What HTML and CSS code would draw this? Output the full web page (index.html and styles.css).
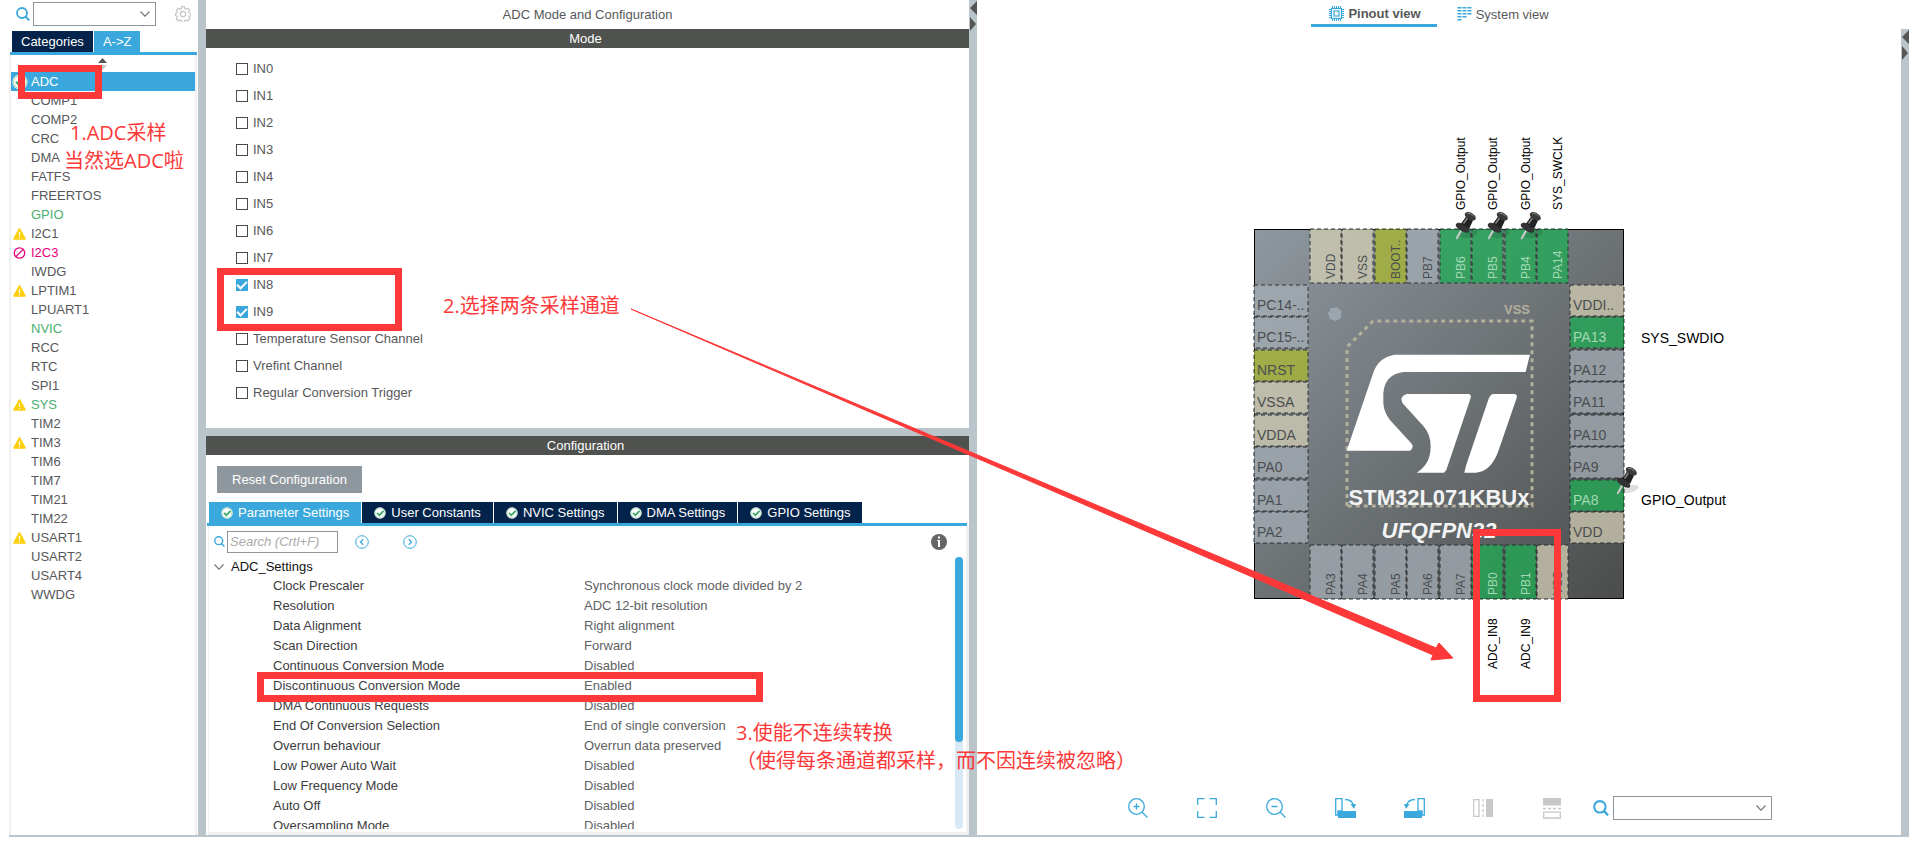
FILE: index.html
```html
<!DOCTYPE html>
<html lang="en">
<head>
<meta charset="utf-8">
<title>ADC Mode and Configuration</title>
<link rel="stylesheet" href="styles.css">
</head>
<body>
<svg class="defs" aria-hidden="true">
  <symbol id="search" viewBox="0 0 14 14"><circle cx="6" cy="6" r="5" fill="none" stroke="#3aa8dc" stroke-width="1.8"/><path d="M9.5 9.5 13.2 13.4" stroke="#3aa8dc" stroke-width="2"/></symbol>
  <symbol id="chevron" viewBox="0 0 10 6"><path d="M.5.5 5 5.2 9.5.5" fill="none" stroke="#777" stroke-width="1.2"/></symbol>
  <symbol id="warn" viewBox="0 0 13 12"><path d="M6.5 1 12 11H1Z" fill="#ffcf0a" stroke="#ffcf0a" stroke-width="1.6" stroke-linejoin="round"/><path d="M6.5 4v4M6.5 9v1.2" stroke="#fff" stroke-width="1.2"/></symbol>
  <symbol id="banned" viewBox="0 0 12 12"><circle cx="6" cy="6" r="5.2" fill="none" stroke="#e6007e" stroke-width="1.3"/><path d="M2.4 9.6 9.6 2.4" stroke="#e6007e" stroke-width="1.3"/></symbol>
  <symbol id="ok" viewBox="0 0 12 12"><circle cx="6" cy="6" r="5.7" fill="#fff"/><circle cx="6" cy="6" r="4.9" fill="#fff" stroke="#a9d9b8" stroke-width=".8"/><path d="M3 5.8 5.4 8.2 9.6 3.8" fill="none" stroke="#3cab64" stroke-width="1.7"/></symbol>
  <symbol id="pushpin" viewBox="0 0 32 30">
    <ellipse cx="14" cy="23" rx="9" ry="3.5" transform="rotate(-14 14 23)" fill="#000" opacity=".13"/>
    <path d="M1.5 28 7 18" stroke="#d8d8d8" stroke-width="2"/><path d="M2.3 28 7.6 19" stroke="#888" stroke-width=".7"/>
    <path d="M.8 13.5C2 11 6 11.5 9 14c4 2 6 5 5 7-2 2-6 0-9-2C2 17 .3 15 .8 13.5Z" fill="#333"/>
    <path d="M6 12.5 11.5 5 18 9.500 14 18Z" fill="#222"/><path d="M8.500 12.500 12.500 7" stroke="#888" stroke-width="1.5"/>
    <path d="M9.800 3C11 .3 15 .5 18 3c3 2 3.500 4.500 2 6-2 1.300-6-.3-8-2C10.300 5.500 9.500 4.200 9.800 3Z" fill="#3a3a3a"/><path d="M12 3c2-1.500 5 .4 6.500 2.300" stroke="#909090" fill="none"/>
  </symbol>
</svg>

<div class="workspace">
  <aside class="sidebar">
    <div class="side-search">
      <svg class="i14"><use href="#search"/></svg>
      <div class="combo"><select aria-label="Search peripherals"><option></option></select><svg class="chev"><use href="#chevron"/></svg></div>
      <button class="gear" aria-label="Settings"><svg width="16" height="16" viewBox="0 0 16 16" fill="none" stroke="#c4c4c4"><circle cx="8" cy="8" r="2.700" stroke-width="1.200"/><path stroke-width="1.200" d="M6.700.7h2.600l.5 1.900 1.300.6 1.700-1 1.900 1.900-1 1.700.5 1.200 2 .5v2l-2 .6-.5 1.200 1 1.700-1.900 1.900-1.700-1-1.300.5-.5 1.900H6.700l-.5-1.900-1.300-.5-1.700 1L1.300 13l1-1.700-.5-1.200-1.200-.6v-2l1.300-.5.5-1.200-1-1.700 1.800-1.900 1.700 1 1.300-.6Z"/></svg></button>
    </div>
    <div class="side-tabs"><button class="tab">Categories</button><button class="tab active">A-&gt;Z</button></div>
    <div class="side-body">
      <div class="sorter"><svg width="9" height="12" viewBox="0 0 9 12"><path d="M0 5 4.500 0 9 5Z" fill="#555"/><path d="M0 7 4.500 12 9 7Z" fill="#ccc"/></svg></div>
      <ul class="ips">
        <li class="selected"><svg class="big"><use href="#ok"/></svg>ADC</li>
        <li>COMP1</li><li>COMP2</li><li>CRC</li><li>DMA</li><li>FATFS</li><li>FREERTOS</li>
        <li class="on">GPIO</li>
        <li><svg><use href="#warn"/></svg>I2C1</li>
        <li class="off"><svg><use href="#banned"/></svg>I2C3</li>
        <li>IWDG</li>
        <li><svg><use href="#warn"/></svg>LPTIM1</li>
        <li>LPUART1</li><li class="on">NVIC</li><li>RCC</li><li>RTC</li><li>SPI1</li>
        <li class="on"><svg><use href="#warn"/></svg>SYS</li>
        <li>TIM2</li>
        <li><svg><use href="#warn"/></svg>TIM3</li>
        <li>TIM6</li><li>TIM7</li><li>TIM21</li><li>TIM22</li>
        <li><svg><use href="#warn"/></svg>USART1</li>
        <li>USART2</li><li>USART4</li><li>WWDG</li>
      </ul>
    </div>
  </aside>
  <div class="splitter"></div>

  <main class="center">
    <h1>ADC Mode and Configuration</h1>
    <section class="mode">
      <h2>Mode</h2>
      <div class="checks">
        <label><input type="checkbox">IN0</label>
        <label><input type="checkbox">IN1</label>
        <label><input type="checkbox">IN2</label>
        <label><input type="checkbox">IN3</label>
        <label><input type="checkbox">IN4</label>
        <label><input type="checkbox">IN5</label>
        <label><input type="checkbox">IN6</label>
        <label><input type="checkbox">IN7</label>
        <label><input type="checkbox" checked>IN8</label>
        <label><input type="checkbox" checked>IN9</label>
        <label><input type="checkbox">Temperature Sensor Channel</label>
        <label><input type="checkbox">Vrefint Channel</label>
        <label><input type="checkbox">Regular Conversion Trigger</label>
      </div>
    </section>
    <div class="splitter row"></div>
    <section class="config">
      <h2>Configuration</h2>
      <button class="reset">Reset Configuration</button>
      <div class="tabs">
        <button class="tab active"><svg><use href="#ok"/></svg>Parameter Settings</button>
        <button class="tab"><svg><use href="#ok"/></svg>User Constants</button>
        <button class="tab"><svg><use href="#ok"/></svg>NVIC Settings</button>
        <button class="tab"><svg><use href="#ok"/></svg>DMA Settings</button>
        <button class="tab"><svg><use href="#ok"/></svg>GPIO Settings</button>
      </div>
      <div class="config-body">
        <div class="find">
          <svg class="i11"><use href="#search"/></svg>
          <input type="text" placeholder="Search (Crtl+F)" aria-label="Search parameters">
          <button aria-label="Previous"><svg width="14" height="14" viewBox="0 0 14 14" fill="none" stroke="#3aa8dc"><circle cx="7" cy="7" r="6.300"/><path d="M8.200 4.200 5.500 7l2.700 2.800" stroke-width="1.300"/></svg></button>
          <button class="next" aria-label="Next"><svg width="14" height="14" viewBox="0 0 14 14" fill="none" stroke="#3aa8dc"><circle cx="7" cy="7" r="6.300"/><path d="M5.800 4.200 8.500 7 5.800 9.800" stroke-width="1.300"/></svg></button>
          <button class="info" aria-label="Information"><svg width="16" height="16" viewBox="0 0 16 16"><circle cx="8" cy="8" r="8" fill="#666"/><path d="M7 2.500h2v2H7zM6.200 6H9v7H7V7h-.8z" fill="#fff"/></svg></button>
        </div>
        <div class="params">
          <div class="scroller">
            <div class="group"><svg class="chev"><use href="#chevron"/></svg>ADC_Settings</div>
            <table>
              <tr><th scope="row">Clock Prescaler</th><td>Synchronous clock mode divided by 2</td></tr>
              <tr><th scope="row">Resolution</th><td>ADC 12-bit resolution</td></tr>
              <tr><th scope="row">Data Alignment</th><td>Right alignment</td></tr>
              <tr><th scope="row">Scan Direction</th><td>Forward</td></tr>
              <tr><th scope="row">Continuous Conversion Mode</th><td>Disabled</td></tr>
              <tr><th scope="row">Discontinuous Conversion Mode</th><td>Enabled</td></tr>
              <tr><th scope="row">DMA Continuous Requests</th><td>Disabled</td></tr>
              <tr><th scope="row">End Of Conversion Selection</th><td>End of single conversion</td></tr>
              <tr><th scope="row">Overrun behaviour</th><td>Overrun data preserved</td></tr>
              <tr><th scope="row">Low Power Auto Wait</th><td>Disabled</td></tr>
              <tr><th scope="row">Low Frequency Mode</th><td>Disabled</td></tr>
              <tr><th scope="row">Auto Off</th><td>Disabled</td></tr>
              <tr><th scope="row">Oversampling Mode</th><td>Disabled</td></tr>
            </table>
          </div>
          <div class="track"><div class="thumb"></div></div>
        </div>
      </div>
    </section>
  </main>
  <div class="splitter"><svg width="8" height="32" viewBox="0 0 8 32" fill="#555"><path d="M8 1v14L1 8ZM1 17v14l6-7Z"/></svg></div>

  <section class="pinout">
    <nav class="views">
      <button class="view active"><svg width="15" height="15" viewBox="0 0 15 15" fill="none" stroke="#3aa8dc"><path d="M3.500 0v15M5.500 0v15M7.500 0v15M9.500 0v15M11.500 0v15M0 3.500h15M0 5.500h15M0 7.500h15M0 9.500h15M0 11.500h15"/><rect x="2.500" y="2.500" width="10" height="10" fill="#fff" stroke-width="1.200"/><rect x="5" y="5" width="5" height="5" stroke-width="1.200"/></svg>Pinout view</button>
      <button class="view"><svg width="15" height="14" viewBox="0 0 15 14" stroke="#3aa8dc" fill="none"><path d="M2.500 0v14" stroke-width="4" stroke-dasharray="1.500 1.500"/><path d="M7.500 0v11" stroke-width="4" stroke-dasharray="1.500 1.500"/><path d="M12.500 0v8" stroke-width="4" stroke-dasharray="1.500 1.500"/></svg>System view</button>
    </nav>
    <div class="canvas">
      <svg class="chip" width="600" height="600" viewBox="-115 -115 600 600">
        <defs><linearGradient id="body" x1="0" y1="0" x2="1" y2="1"><stop offset="0" stop-color="#8f989f"/><stop offset=".5" stop-color="#6d7275"/><stop offset="1" stop-color="#4b4d4c"/></linearGradient></defs>
        <rect x=".5" y=".5" width="369" height="369" fill="url(#body)" stroke="#000"/>
        <g class="h">
          <g class="io" transform="translate(0 56)"><rect/><text>PC14-..</text></g>
          <g class="io" transform="translate(0 88)"><rect/><text>PC15-..</text></g>
          <g class="rst" transform="translate(0 121)"><rect/><text>NRST</text></g>
          <g class="pwr" transform="translate(0 153)"><rect/><text>VSSA</text></g>
          <g class="pwr" transform="translate(0 186)"><rect/><text>VDDA</text></g>
          <g class="io" transform="translate(0 218)"><rect/><text>PA0</text></g>
          <g class="io" transform="translate(0 251)"><rect/><text>PA1</text></g>
          <g class="io" transform="translate(0 283)"><rect/><text>PA2</text></g>
          <g class="pwr" transform="translate(316 56)"><rect/><text>VDDI..</text></g>
          <g class="used" transform="translate(316 88)"><rect/><text>PA13</text></g>
          <g class="io" transform="translate(316 121)"><rect/><text>PA12</text></g>
          <g class="io" transform="translate(316 153)"><rect/><text>PA11</text></g>
          <g class="io" transform="translate(316 186)"><rect/><text>PA10</text></g>
          <g class="io" transform="translate(316 218)"><rect/><text>PA9</text></g>
          <g class="used" transform="translate(316 251)"><rect/><text>PA8</text></g>
          <g class="pwr" transform="translate(316 283)"><rect/><text>VDD</text></g>
        </g>
        <g class="v">
          <g class="pwr" transform="translate(56 0)"><rect/><text>VDD</text></g>
          <g class="pwr" transform="translate(88 0)"><rect/><text>VSS</text></g>
          <g class="rst" transform="translate(121 0)"><rect/><text>BOOT..</text></g>
          <g class="io" transform="translate(153 0)"><rect/><text>PB7</text></g>
          <g class="used" transform="translate(186 0)"><rect/><text>PB6</text></g>
          <g class="used" transform="translate(218 0)"><rect/><text>PB5</text></g>
          <g class="used" transform="translate(251 0)"><rect/><text>PB4</text></g>
          <g class="used" transform="translate(283 0)"><rect/><text>PA14</text></g>
          <g class="io" transform="translate(56 316)"><rect/><text>PA3</text></g>
          <g class="io" transform="translate(88 316)"><rect/><text>PA4</text></g>
          <g class="io" transform="translate(121 316)"><rect/><text>PA5</text></g>
          <g class="io" transform="translate(153 316)"><rect/><text>PA6</text></g>
          <g class="io" transform="translate(186 316)"><rect/><text>PA7</text></g>
          <g class="used" transform="translate(218 316)"><rect/><text>PB0</text></g>
          <g class="used" transform="translate(251 316)"><rect/><text>PB1</text></g>
          <g class="pwr" transform="translate(283 316)"><rect/><text>VSS</text></g>
        </g>
        <circle cx="81" cy="85" r="7" fill="#9aa5ad" stroke="#75808a" stroke-dasharray="3 3"/>
        <path d="M93 277V118L119 92H278V277Z" fill="none" stroke="#b3b09b" stroke-width="3" stroke-dasharray="4 4"/>
        <text class="pad" x="276" y="85">VSS</text>
        <g transform="translate(-14 111) scale(.3333)" fill="#fff">
          <path d="M320 332 402 92Q420 50 465 44H870L857 96H490Q434 104 430 160V190Q432 218 450 240L515 311Q523 323 510 332Z"/>
          <path d="M500 162H686Q695 164 692 174L619 390 612 398H530Q572 372 572 320 572 282 550 258L488 190Q477 170 500 162Z"/>
          <path d="M760 162H824Q833 164 830 174L775 334Q752 396 708 398H673L679 374 744 182Q750 162 760 162Z"/>
        </g>
        <text class="part" x="185" y="276">STM32L071KBUx</text>
        <text class="part pkg" x="185" y="309">UFQFPN32</text>
        <g class="signals">
          <text x="387" y="114">SYS_SWDIO</text>
          <text x="387" y="276">GPIO_Output</text>
          <g class="vertical">
            <text transform="translate(211 -19) rotate(-90)">GPIO_Output</text>
            <text transform="translate(243 -19) rotate(-90)">GPIO_Output</text>
            <text transform="translate(276 -19) rotate(-90)">GPIO_Output</text>
            <text transform="translate(308 -19) rotate(-90)">SYS_SWCLK</text>
            <text transform="translate(243 440) rotate(-90)">ADC_IN8</text>
            <text transform="translate(276 440) rotate(-90)">ADC_IN9</text>
          </g>
        </g>
        <use href="#pushpin" x="201" y="-18" width="32" height="30"/>
        <use href="#pushpin" x="233" y="-18" width="32" height="30"/>
        <use href="#pushpin" x="266" y="-18" width="32" height="30"/>
        <use href="#pushpin" x="362" y="237" width="32" height="30"/>
      </svg>
    </div>
    <div class="tools">
      <button aria-label="Zoom in"><svg viewBox="0 0 20 20"><circle cx="8.500" cy="8.500" r="7.800"/><path d="M14 14 19.500 19.500M5.500 8.500h6M8.500 5.500v6"/></svg></button>
      <button aria-label="Fit"><svg viewBox="0 0 20 20"><path d="M.7 7V.7H7.500M12.500.7h6.800V7M19.300 13v6.300h-6.800M7.500 19.300H.7V13"/></svg></button>
      <button aria-label="Zoom out"><svg viewBox="0 0 20 20"><circle cx="8.500" cy="8.500" r="7.800"/><path d="M14 14 19.500 19.500M5.500 8.500h6"/></svg></button>
      <button aria-label="Rotate right"><svg viewBox="0 0 20 20"><path d="M.7 17V.7H7V13H3v4Z"/><path d="M3 13h18v7H3zM15.500 6h5.500l-2 5Z" class="solid"/><path d="M10 1.500q7 0 8.500 6"/></svg></button>
      <button aria-label="Rotate left"><svg viewBox="0 0 20 20"><path d="M20.300 17V.7H14V13H18v4Z"/><path d="M0 13h18v7H0zM0 6h5.500l-3.500 5Z" class="solid"/><path d="M11 1.500q-7 0-8.500 6"/></svg></button>
      <button aria-label="Flip horizontally" disabled><svg viewBox="0 0 20 20"><path d="M.7 1.700H6V18.300H.7Z"/><path d="M10 1v18" stroke-dasharray="3 2"/><path d="M13 1h7v18h-7z" class="solid"/></svg></button>
      <button aria-label="Flip vertically" disabled><svg viewBox="0 0 20 20"><path d="M1 0h18v7.500H1z" class="solid"/><path d="M1 10.500h18" stroke-dasharray="3 2"/><path d="M1.700 14.200H18.300V20H1.700Z"/></svg></button>
      <div class="pin-search"><svg class="i16"><use href="#search"/></svg><div class="combo"><select aria-label="Find pin"><option></option></select><svg class="chev"><use href="#chevron"/></svg></div></div>
    </div>
  </section>
  <div class="splitter last"><svg width="8" height="32" viewBox="0 0 8 32" fill="#555"><path d="M8 1v14L1 8ZM1 17v14l6-7Z"/></svg></div>
</div>

<svg class="notes">
  <g fill="none" stroke="#fc3838" stroke-width="7">
    <rect x="21.500" y="68.500" width="77" height="27"/>
    <rect x="220.500" y="271.500" width="178" height="56"/>
    <rect x="260.500" y="675.500" width="499" height="23"/>
    <rect x="1476.500" y="532.500" width="81" height="166"/>
  </g>
  <path d="M631 309 1436 648 1439 643 1453 658 1431 660 1433 655 Z" fill="#fc3838" stroke="#fc3838"/>
  <g class="note-text">
    <text x="70" y="140">1.ADC采样</text>
    <text x="64" y="168">当然选ADC啦</text>
    <text x="443" y="313">2.选择两条采样通道</text>
    <text x="736" y="740">3.使能不连续转换</text>
    <text x="736" y="768">（使得每条通道都采样，而不因连续被忽略）</text>
  </g>
</svg>
</body>
</html>
```
FILE: styles.css
```css
* { box-sizing: border-box; }
body {
  margin: 0;
  position: relative;
  background: #fff;
  color: #57585a;
  font: 13px/19px "Liberation Sans", Arial, sans-serif;
}
button, input, select { font: inherit; color: inherit; margin: 0; border-radius: 0; }
button { border: 0; padding: 0; background: none; }
svg { display: block; flex: none; }
h1, h2 { margin: 0; font-size: 13px; font-weight: 400; text-align: center; }
.defs { position: absolute; width: 0; height: 0; }

.workspace {
  display: grid;
  grid-template-columns: 189px 8px minmax(0, 763fr) 8px minmax(0, 924fr) 8px;
  height: calc(100vh - 8px);
  margin: 0 6px 0 9px;
  border-bottom: 2px solid #b9c4cb;
}
.splitter { background: #b9c4cb; }
.splitter.row { height: 8px; flex: none; }
.splitter.last { margin-top: 29px; }

.i11 { width: 11px; height: 11px; }
.i14 { width: 14px; height: 14px; }
.i16 { width: 16px; height: 16px; }
.combo { display: grid; align-items: center; }
.combo > * { grid-area: 1 / 1; }
.combo select { appearance: none; width: 100%; height: 24px; background: #fff; border: 1px solid #8e959b; }
.combo .chev { justify-self: end; margin-right: 6px; pointer-events: none; }
.chev { width: 10px; height: 6px; }

/* peripheral list */
.sidebar { display: flex; flex-direction: column; min-height: 0; }
.side-search { display: flex; align-items: center; padding: 2px 7px 5px 7px; }
.side-search .combo { width: 123px; margin-left: 3px; }
.gear { margin-left: auto; }
.side-tabs { display: flex; gap: 1px; padding-left: 2px; border-bottom: 3px solid #3aa8dc; margin: 0 1px; }
.tab { height: 21px; background: #03234b; color: #fff; }
.tab.active { background: #3aa8dc; }
.side-tabs .tab { padding: 0 9px; }
.side-body { flex: 1; border: solid #f0f0f0; border-width: 0 2px; margin-right: 1px; }
.sorter { display: flex; justify-content: center; height: 17px; padding: 3px 2px 0 0; }
.ips { list-style: none; margin: 0; padding: 0; }
.ips li { display: grid; grid-template-columns: 20px 1fr; align-items: center; height: 19px; padding-bottom: 1px; }
.ips li:not(:has(svg)) { padding-left: 20px; grid-template-columns: 1fr; }
.ips svg { width: 13px; height: 12px; margin-left: 2px; }
.ips .big { width: 16px; height: 16px; margin-left: 1px; }
.ips .on { color: #4caf6e; }
.ips .off { color: #e6007e; }
.ips .selected { background: #3aa8dc; color: #fff; }

/* mode and configuration */
.center { display: flex; flex-direction: column; min-height: 0; }
h1 { padding: 5px 0; }
h2 { background: #50524f; color: #fff; height: 19px; padding-right: 4px; }
.mode { flex: none; }
.checks { padding: 7px 0 22px 30px; }
.checks label { display: flex; align-items: center; gap: 5px; height: 27px; }
.checks input {
  appearance: none; width: 12px; height: 12px; border: 1px solid #4a4a4a; background: #fff;
  display: grid; place-items: center;
}
.checks input:checked { background: #3aa8dc; border-color: #3aa8dc; }
.checks input:checked::before {
  content: ""; width: 8px; height: 4px; margin-bottom: 2px;
  border: solid #fff; border-width: 0 0 2px 2px; rotate: -45deg;
}
.config { flex: 1; min-height: 0; display: flex; flex-direction: column; }
.reset { align-self: flex-start; margin: 11px 0 9px 11px; height: 27px; padding: 0 15px; background: #8f979e; color: #fff; }
.tabs { display: flex; gap: 1px; margin: 0 2px 0 1px; padding-left: 2px; border-bottom: 3px solid #3aa8dc; }
.tabs .tab { display: flex; align-items: center; gap: 5px; padding: 0 12px; }
.tabs svg { width: 12px; height: 12px; }
.config-body { flex: 1; min-height: 0; display: flex; flex-direction: column; margin-left: 2px; border: solid #f0f0f0; border-width: 0 3px 3px 1px; padding-bottom: 3px; }
.find { display: flex; align-items: center; height: 31px; padding: 0 19px 0 5px; }
.find input { width: 111px; height: 22px; margin: 0 17px 0 2px; padding: 0 2px; border: 1px solid #8e959b; background: #fff; }
.find input::placeholder { color: #aaa; font-style: italic; opacity: 1; }
.find .next { margin-left: 34px; }
.find .info { margin-left: auto; }
.params { flex: 1; min-height: 0; display: flex; padding-right: 3px; }
.scroller { flex: 1; overflow: hidden; }
.group { display: flex; align-items: center; gap: 7px; height: 20px; padding: 0 0 1px 5px; color: #111; }
table { width: 100%; border-collapse: collapse; table-layout: fixed; color: #606163; line-height: 18px; }
th, td { height: 20px; padding: 0 0 2px; text-align: left; font-weight: 400; white-space: nowrap; }
th { width: 375px; padding-left: 64px; color: #3c3d3e; }
.track { width: 8px; background: #d9e8f5; border-radius: 4px; }
.thumb { height: 68%; background: #3aa8dc; border-radius: 4px; }

/* pinout */
.pinout { display: flex; flex-direction: column; min-height: 0; }
.views { display: flex; justify-content: center; gap: 20px; height: 27px; padding-right: 8px; }
.view { display: flex; align-items: center; gap: 4px; height: 27px; padding: 2px 10px 0 18px; }
.view + .view { padding-left: 0; padding-bottom: 1px; }
.view.active { padding-right: 16px; border-bottom: 3px solid #3aa8dc; font-weight: 700; }
.canvas { flex: 1; min-height: 0; display: flex; align-items: center; justify-content: center; padding-top: 4px; }
.chip { font-size: 14px; }
.h rect, .v rect { stroke: #2d3032; stroke-dasharray: 4 3; fill-opacity: .75; }
.h rect { width: 54px; height: 31px; }
.v rect { width: 31px; height: 54px; }
.h text { transform: translate(3px, 25px); }
.v text { transform: translate(25px, 50px) rotate(-90deg); font-size: 12px; }
.io rect { fill: #a6aeb6; }
.pwr rect { fill: #d3ceb4; }
.rst rect { fill: #abb830; }
.used rect { fill: #20ac56; }
.h text, .v text { fill: #4b4e50; }
.h .used text, .v .used text { fill: #a3dab4; }
.pad { font-size: 13px; font-weight: 700; text-anchor: end; fill: #b3b09b; }
.part { font-size: 22px; font-weight: 700; text-anchor: middle; fill: #f2f3f4; }
.pkg { font-style: italic; }
.signals { fill: #000; }
.vertical { font-size: 12px; }
.tools { display: flex; align-items: center; justify-content: center; gap: 49px; padding: 0 0 15px 22px; }
.tools button { width: 20px; height: 20px; }
.tools button svg { width: 20px; height: 20px; overflow: visible; fill: none; stroke: #3aa8dc; stroke-width: 1.3; }
.tools button .solid { fill: #3aa8dc; stroke: none; }
.tools button:disabled svg { stroke: #c8c8c8; }
.tools button:disabled .solid { fill: #c8c8c8; }
.pin-search { display: flex; align-items: center; gap: 4px; margin-left: -18px; }
.pin-search .combo { width: 159px; }

/* callouts drawn over the whole window */
.notes { position: absolute; inset: 0; width: 100%; height: 100%; pointer-events: none; }
.note-text { fill: #fc3838; font: 20px "Open Sans", "Noto Sans CJK SC", sans-serif; }
```
